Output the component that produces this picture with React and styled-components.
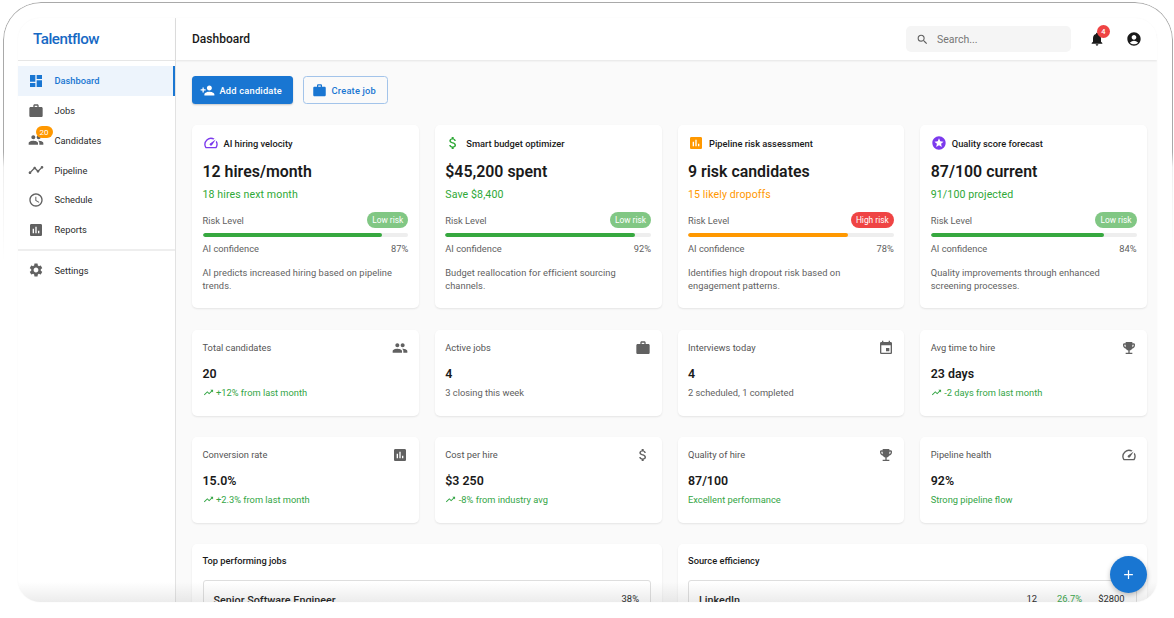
import React from "react";
import styled, { createGlobalStyle } from "styled-components";
import {
  MdDashboard, MdWork, MdPeople, MdTimeline, MdAccessTime, MdAssessment, MdSettings,
  MdPersonAdd, MdSpeed, MdAttachMoney, MdStars, MdTrendingUp, MdEvent, MdEmojiEvents,
  MdSearch, MdNotifications, MdAccountCircle, MdAdd,
} from "react-icons/md";

const Global = createGlobalStyle`
  html, body { margin: 0; padding: 0; background: #fff; }
  body { font-family: Roboto, "Liberation Sans", sans-serif; color: #1a1a1a; overflow: hidden; }
  * { box-sizing: border-box; }
`;

const Frame = styled.div`
  position: relative;
  width: 1174px;
  height: 618px;
  padding: 18px 17px 16px 18px;
  background: #fff;
  &::before {
    content: "";
    position: absolute;
    left: 3px; top: 2px; right: 1px; height: 300px;
    border: 1px solid #a9a9a9;
    border-bottom: 0;
    border-radius: 38px 38px 0 0;
    -webkit-mask-image: linear-gradient(#000 0, #000 150px, rgba(0,0,0,.2) 165px, transparent 260px);
    mask-image: linear-gradient(#000 0, #000 150px, rgba(0,0,0,.2) 165px, transparent 260px);
  }
`;
const Shell = styled.div`
  position: relative;
  display: flex;
  height: 100%;
  background: #fff;
  border-radius: 22px;
  overflow: hidden;
  box-shadow: 0 0 2px rgba(0,0,0,.04);
`;
const BottomFade = styled.div`
  position: absolute;
  left: 0; right: 0; bottom: 0;
  height: 20px;
  background: linear-gradient(rgba(120,120,120,0), rgba(120,120,120,.14));
  pointer-events: none;
`;
const Sidebar = styled.aside`
  flex: 0 0 158px;
  border-right: 1px solid #e2e2e2;
  display: flex;
  flex-direction: column;
`;
const LogoRow = styled.div`
  height: 43px;
  flex: none;
  padding-left: 15px;
  display: flex;
  align-items: center;
  border-bottom: 1px solid #e6e6e6;
`;
const Logo = styled.div`
  color: #1769c4;
  font-size: 15.2px;
  font-weight: 500;
  letter-spacing: -0.5px;
`;
const Nav = styled.nav`
  padding-top: 5px;
  display: flex;
  flex-direction: column;
`;
const NavItem = styled.div`
  position: relative;
  height: 29.75px;
  display: flex;
  align-items: center;
  padding-left: 10px;
  gap: 10.5px;
  font-size: 9.3px;
  color: ${(p) => (p.$active ? "#1976d2" : "#2a2a2a")};
  font-weight: ${(p) => (p.$active ? 500 : 400)};
  background: ${(p) => (p.$active ? "#edf4fc" : "transparent")};
  border-right: ${(p) => (p.$active ? "2px solid #1976d2" : "0")};
  svg { flex: none; color: ${(p) => (p.$active ? "#1976d2" : "#616161")}; }
`;
const NavBadge = styled.span`
  position: absolute;
  left: 17.5px; top: 0;
  min-width: 17px;
  height: 12.5px;
  border-radius: 7px;
  background: #ff9800;
  color: #fff;
  font-size: 8px;
  line-height: 13px;
  text-align: center;
`;
const NavDivider = styled.div`
  height: 2px;
  margin: 4.25px 0 4.5px;
  background: #eeeeee;
`;
const Content = styled.div`
  flex: 1;
  min-width: 0;
  display: flex;
  flex-direction: column;
`;
const Header = styled.header`
  height: 42px;
  flex: none;
  background: #fff;
  display: flex;
  align-items: center;
  padding: 0 15px 0 16px;
  box-shadow: 0 1px 2px rgba(0,0,0,.09);
  position: relative;
`;
const PageTitle = styled.div`
  flex: 1;
  font-size: 12px;
  font-weight: 500;
  color: #1a1a1a;
`;
const SearchBox = styled.div`
  width: 165px;
  height: 26px;
  border-radius: 5px;
  background: #f5f5f5;
  display: flex;
  align-items: center;
  padding-left: 10px;
  gap: 8px;
  font-size: 10.5px;
  color: #757575;
  svg { color: #616161; }
`;
const HeaderIcon = styled.div`
  position: relative;
  display: flex;
  color: #1a1a1a;
  margin-left: ${(p) => p.$ml}px;
`;
const Count = styled.span`
  position: absolute;
  left: 8px; top: -6px;
  width: 13px; height: 13px;
  border-radius: 50%;
  background: #ef4444;
  color: #fff;
  font-size: 7.5px;
  font-weight: 500;
  line-height: 13px;
  text-align: center;
`;
const Main = styled.main`
  flex: 1;
  min-height: 0;
  overflow: hidden;
  background: #fafafa;
  padding: 16px 10px 0 16px;
`;
const Actions = styled.div`
  display: flex;
  gap: 10px;
  margin-bottom: 21px;
`;
const Button = styled.div`
  height: 28px;
  display: flex;
  align-items: center;
  gap: 4.5px;
  padding: 0 ${(p) => (p.$primary ? 11 : 10.5)}px 0 8px;
  border-radius: 3.5px;
  font-size: 9.3px;
  font-weight: 500;
  letter-spacing: 0.2px;
  color: ${(p) => (p.$primary ? "#fff" : "#1976d2")};
  background: ${(p) => (p.$primary ? "#1976d2" : "transparent")};
  border: ${(p) => (p.$primary ? "0" : "1px solid #a3c4ea")};
  box-shadow: ${(p) => (p.$primary ? "0 1px 2px rgba(0,0,0,.2)" : "none")};
`;
const Grid = styled.section`
  display: grid;
  grid-template-columns: repeat(${(p) => p.$cols}, 1fr);
  gap: 16px;
  margin-bottom: ${(p) => p.$mb ?? 21}px;
`;
const Card = styled.div`
  background: #fff;
  border-radius: 5px;
  padding: 10px 10.5px 11px;
  box-shadow: 0 1px 2px rgba(0,0,0,.09);
`;
const InsightTop = styled.div`
  display: flex;
  align-items: center;
  gap: 5px;
  height: 16px;
  font-size: 9.3px;
  font-weight: 500;
  color: #1a1a1a;
`;
const InsightValue = styled.div`
  font-size: 15.9px;
  font-weight: 600;
  line-height: 20px;
  margin-top: 11px;
`;
const InsightSub = styled.div`
  font-size: 10.6px;
  line-height: 14px;
  letter-spacing: 0.1px;
  margin-top: 6px;
  color: ${(p) => p.$color};
`;
const Between = styled.div`
  display: flex;
  align-items: center;
  justify-content: space-between;
  color: #616161;
  font-size: 9.3px;
`;
const RiskRow = styled(Between)`
  height: 16px;
  margin-top: 10px;
`;
const Chip = styled.span`
  height: 16px;
  padding: 0 5px;
  border-radius: 8px;
  font-size: 8.4px;
  line-height: 16px;
  font-weight: 400;
  color: #fff;
  background: ${(p) => (p.$high ? "#ef4444" : "#81c784")};
`;
const Track = styled.div`
  height: 4px;
  border-radius: 2px;
  margin-top: 5px;
  background: #eeeeee;
  overflow: hidden;
`;
const Fill = styled.div`
  height: 100%;
  border-radius: 2px;
  background: ${(p) => p.$color};
`;
const ConfRow = styled(Between)`
  margin-top: 5px;
  height: 12px;
`;
const Description = styled.div`
  margin-top: 12px;
  font-size: 9.3px;
  line-height: 13.2px;
  letter-spacing: 0.05px;
  color: #616161;
  padding-bottom: 4.6px;
`;
const StatCard = styled(Card)`
  height: 86px;
`;
const StatTop = styled.div`
  display: flex;
  justify-content: space-between;
  align-items: center;
  height: 15px;
  font-size: 9.3px;
  color: #555;
  svg { color: #616161; flex: none; }
`;
const StatValue = styled.div`
  font-size: 12.4px;
  font-weight: 600;
  line-height: 16px;
  margin-top: 11px;
`;
const StatSub = styled.div`
  display: flex;
  align-items: center;
  gap: 2.5px;
  margin-top: 3px;
  height: 14px;
  font-size: 9.3px;
  color: ${(p) => (p.$green ? "#33a545" : "#616161")};
`;
const PanelCard = styled(Card)`
  height: 200px;
`;
const PanelTitle = styled.div`
  font-size: 9.3px;
  font-weight: 500;
  line-height: 14px;
  color: #1a1a1a;
  margin: 0 0 12px;
`;
const Row = styled.div`
  border: 1px solid #dedede;
  border-radius: 3px;
  padding: 12px 11px 12px 10px;
  display: flex;
  align-items: flex-start;
  gap: 16px;
  font-size: 9.4px;
`;
const RowName = styled.div`
  flex: 1;
  font-size: 10.8px;
  font-weight: 500;
  padding-top: 1px;
`;
const RowCount = styled.span`
  margin-right: 4px;
`;
const Green = styled.span`
  color: #33a545;
`;
const Fab = styled.div`
  position: absolute;
  right: 10px;
  bottom: 9.5px;
  width: 37px;
  height: 37px;
  border-radius: 50%;
  background: #1976d2;
  color: #fff;
  display: flex;
  align-items: center;
  justify-content: center;
  box-shadow: 0 2px 5px rgba(0,0,0,.25);
  z-index: 2;
`;

const nav = [
  [MdDashboard, "Dashboard", true],
  [MdWork, "Jobs"],
  [MdPeople, "Candidates", false, "20"],
  [MdTimeline, "Pipeline"],
  [MdAccessTime, "Schedule"],
  [MdAssessment, "Reports"],
];

const insights = [
  { Icon: MdSpeed, ic: "#7c3aed", t: "AI hiring velocity", v: "12 hires/month", s: "18 hires next month", c: "#2ea836", chip: "Low risk", conf: 87, d: "AI predicts increased hiring based on pipeline trends." },
  { Icon: MdAttachMoney, ic: "#2ea836", t: "Smart budget optimizer", v: "$45,200 spent", s: "Save $8,400", c: "#2ea836", chip: "Low risk", conf: 92, d: "Budget reallocation for efficient sourcing channels." },
  { Icon: MdAssessment, ic: "#ff9800", t: "Pipeline risk assessment", v: "9 risk candidates", s: "15 likely dropoffs", c: "#ff9800", chip: "High risk", high: true, conf: 78, d: "Identifies high dropout risk based on engagement patterns." },
  { Icon: MdStars, ic: "#7c3aed", t: "Quality score forecast", v: "87/100 current", s: "91/100 projected", c: "#2ea836", chip: "Low risk", conf: 84, d: "Quality improvements through enhanced screening processes." },
];

const statsA = [
  { t: "Total candidates", Icon: MdPeople, v: "20", s: "+12% from last month", green: true, trend: true },
  { t: "Active jobs", Icon: MdWork, v: "4", s: "3 closing this week" },
  { t: "Interviews today", Icon: MdEvent, v: "4", s: "2 scheduled, 1 completed" },
  { t: "Avg time to hire", Icon: MdEmojiEvents, v: "23 days", s: "-2 days from last month", green: true, trend: true },
];
const statsB = [
  { t: "Conversion rate", Icon: MdAssessment, v: "15.0%", s: "+2.3% from last month", green: true, trend: true },
  { t: "Cost per hire", Icon: MdAttachMoney, v: "$3 250", s: "-8% from industry avg", green: true, trend: true },
  { t: "Quality of hire", Icon: MdEmojiEvents, v: "87/100", s: "Excellent performance", green: true },
  { t: "Pipeline health", Icon: MdSpeed, v: "92%", s: "Strong pipeline flow", green: true },
];

function Stats({ items }) {
  return (
    <Grid $cols={4}>
      {items.map((x) => (
        <StatCard key={x.t}>
          <StatTop>{x.t}<x.Icon size={16} /></StatTop>
          <StatValue>{x.v}</StatValue>
          <StatSub $green={x.green}>{x.trend && <MdTrendingUp size={11} />}{x.s}</StatSub>
        </StatCard>
      ))}
    </Grid>
  );
}

export default function App() {
  return (
    <Frame>
      <Global />
      <Shell>
        <Sidebar>
          <LogoRow><Logo>Talentflow</Logo></LogoRow>
          <Nav>
            {nav.map(([Icon, label, active, badge]) => (
              <NavItem key={label} $active={active}>
                <Icon size={16} />
                {label}
                {badge && <NavBadge>{badge}</NavBadge>}
              </NavItem>
            ))}
            <NavDivider />
            <NavItem><MdSettings size={16} />Settings</NavItem>
          </Nav>
        </Sidebar>
        <Content>
          <Header>
            <PageTitle>Dashboard</PageTitle>
            <SearchBox><MdSearch size={13} />Search...</SearchBox>
            <HeaderIcon $ml={18}>
              <MdNotifications size={16} />
              <Count>4</Count>
            </HeaderIcon>
            <HeaderIcon $ml={21}><MdAccountCircle size={16} /></HeaderIcon>
          </Header>
          <Main>
            <Actions>
              <Button $primary><MdPersonAdd size={15} />Add candidate</Button>
              <Button><MdWork size={15} />Create job</Button>
            </Actions>
            <Grid $cols={4} $mb={22}>
              {insights.map((x) => (
                <Card key={x.t}>
                  <InsightTop><x.Icon size={16} color={x.ic} />{x.t}</InsightTop>
                  <InsightValue>{x.v}</InsightValue>
                  <InsightSub $color={x.c}>{x.s}</InsightSub>
                  <RiskRow>Risk Level<Chip $high={x.high}>{x.chip}</Chip></RiskRow>
                  <Track><Fill $color={x.high ? "#ff9800" : "#36a83f"} style={{ width: `${x.conf}%` }} /></Track>
                  <ConfRow>AI confidence<span>{x.conf}%</span></ConfRow>
                  <Description>{x.d}</Description>
                </Card>
              ))}
            </Grid>
            <Stats items={statsA} />
            <Stats items={statsB} />
            <Grid $cols={2}>
              <PanelCard>
                <PanelTitle>Top performing jobs</PanelTitle>
                <Row><RowName>Senior Software Engineer</RowName><span>38%</span></Row>
              </PanelCard>
              <PanelCard>
                <PanelTitle>Source efficiency</PanelTitle>
                <Row>
                  <RowName>LinkedIn</RowName>
                  <RowCount>12</RowCount><Green>26.7%</Green><span>$2800</span>
                </Row>
              </PanelCard>
            </Grid>
          </Main>
        </Content>
        <BottomFade />
        <Fab><MdAdd size={15} /></Fab>
      </Shell>
    </Frame>
  );
}
